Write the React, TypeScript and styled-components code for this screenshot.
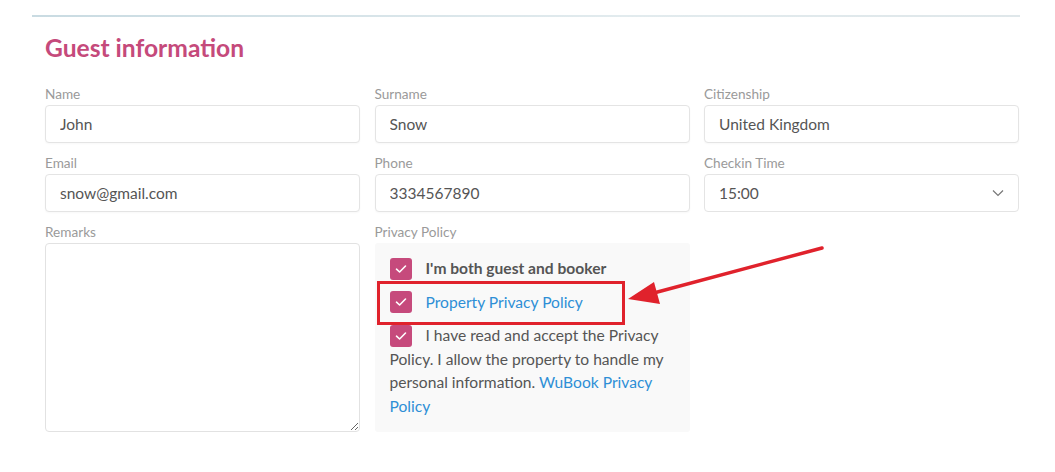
import React from "react";
import styled, { createGlobalStyle } from "styled-components";

const Global = createGlobalStyle`
  html, body { margin: 0; padding: 0; background: #ffffff; }
  body { font-family: Lato, "Open Sans", sans-serif; }
  *, *::before, *::after { box-sizing: border-box; }
`;

const Page = styled.div`
  position: relative;
  width: 1055px;
  height: 472px;
  padding: 15px 35px 0 32px;
`;

const Divider = styled.div`
  height: 2px;
  background: linear-gradient(90deg, #c9dbe2 0%, #e2ebee 60%, #dfe7ea 100%);
`;

const Section = styled.section`
  padding: 0 0 0 13px;
`;

const Heading = styled.h2`
  margin: 16px 0 22px;
  font-size: 24.6px;
  line-height: 30px;
  font-weight: 700;
  color: #c54a7b;
`;

const Grid = styled.div`
  display: grid;
  grid-template-columns: 315px 315px 315px;
  column-gap: 14.5px;
  row-gap: 11px;
`;

const Field = styled.div`
  display: flex;
  flex-direction: column;
`;

const Label = styled.label`
  font-size: 13.6px;
  line-height: 18px;
  color: #9a9a9a;
  margin-bottom: 2px;
`;

const Input = styled.input`
  height: 38px;
  border: 1px solid #e4e4e4;
  border-radius: 4px;
  padding: 0 14px;
  font-family: Lato, sans-serif;
  font-size: 15.5px;
  color: #555;
  background: #fff;
  outline: none;
  box-shadow: 0 1px 2px rgba(0,0,0,0.03);
`;

const SelectBox = styled.div`
  height: 38px;
  border: 1px solid #e4e4e4;
  border-radius: 4px;
  padding: 0 14px;
  display: flex;
  align-items: center;
  justify-content: space-between;
  font-size: 15.5px;
  color: #555;
`;

const TextArea = styled.textarea`
  height: 189px;
  border: 1px solid #e2e2e2;
  border-radius: 4px;
  resize: vertical;
  font-family: Lato, sans-serif;
  outline: none;
`;

const PolicyBox = styled.div`
  height: 189px;
  background: #f9f9f9;
  border-radius: 3px;
  padding: 14px 15px 0 15px;
  font-size: 15.6px;
  line-height: 23.5px;
  color: #555;
`;

const CheckRow = styled.div<{ $bold?: boolean; $highlight?: boolean }>`
  position: relative;
  margin-bottom: 10px;
  font-weight: ${(p) => (p.$bold ? 700 : 400)};
  ${(p) =>
    p.$highlight &&
    `&::after {
      content: "";
      position: absolute;
      left: -13px;
      top: -9.5px;
      width: 248px;
      height: 44px;
      border: 3px solid #e0222c;
    }`}
`;

const Box = styled.span`
  display: inline-flex;
  align-items: center;
  justify-content: center;
  width: 22px;
  height: 22px;
  border-radius: 3px;
  background: #c64a7c;
  vertical-align: top;
  margin-top: 0.5px;
  margin-right: 14px;
`;

const Link = styled.a`
  color: #2e8fd6;
  text-decoration: none;
`;

const Arrow = styled.svg`
  position: absolute;
  left: 620px;
  top: 238px;
`;

const Check = () => (
  <Box>
    <svg width="12" height="10" viewBox="0 0 12 10">
      <path d="M1.5 5.2 L4.6 8 L10.5 2" fill="none" stroke="#fff" strokeWidth="1.6" strokeLinecap="round" strokeLinejoin="round" />
    </svg>
  </Box>
);

export default function App() {
  return (
    <>
      <Global />
      <Page>
        <Divider />
        <Section>
          <Heading>Guest information</Heading>
          <Grid>
            <Field>
              <Label>Name</Label>
              <Input defaultValue="John" />
            </Field>
            <Field>
              <Label>Surname</Label>
              <Input defaultValue="Snow" />
            </Field>
            <Field>
              <Label>Citizenship</Label>
              <Input defaultValue="United Kingdom" />
            </Field>
            <Field>
              <Label>Email</Label>
              <Input defaultValue="snow@gmail.com" />
            </Field>
            <Field>
              <Label>Phone</Label>
              <Input defaultValue="3334567890" />
            </Field>
            <Field>
              <Label>Checkin Time</Label>
              <SelectBox>
                <span>15:00</span>
                <svg width="12" height="8" viewBox="0 0 12 8">
                  <path d="M1 1.5 L6 6.5 L11 1.5" fill="none" stroke="#777" strokeWidth="1.2" />
                </svg>
              </SelectBox>
            </Field>
            <Field>
              <Label>Remarks</Label>
              <TextArea />
            </Field>
            <Field>
              <Label>Privacy Policy</Label>
              <PolicyBox>
                <CheckRow $bold>
                  <Check />I'm both guest and booker
                </CheckRow>
                <CheckRow $highlight>
                  <Check />
                  <Link>Property Privacy Policy</Link>
                </CheckRow>
                <CheckRow>
                  <Check />I have read and accept the Privacy Policy. I allow the property to handle my personal information.{" "}
                  <Link>WuBook Privacy Policy</Link>
                </CheckRow>
              </PolicyBox>
            </Field>
          </Grid>
        </Section>
        <Arrow width="210" height="70" viewBox="0 0 210 70">
          <path d="M202 10 L30 56" stroke="#e0222c" strokeWidth="3.5" strokeLinecap="round" />
          <path d="M8 61 L34 44 L40 66 Z" fill="#e0222c" />
        </Arrow>
      </Page>
    </>
  );
}
